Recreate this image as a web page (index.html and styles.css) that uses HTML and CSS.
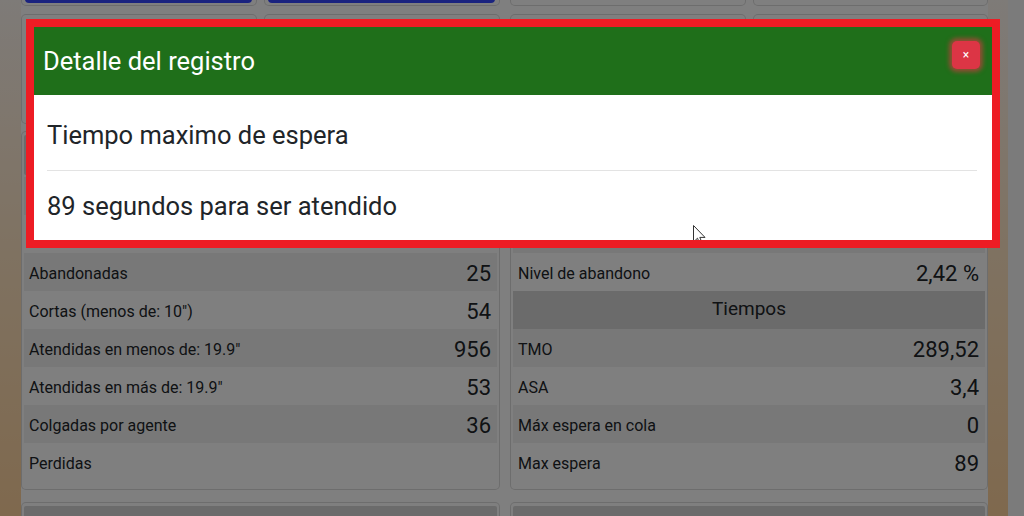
FILE: index.html
```html
<!DOCTYPE html>
<html lang="es">
<head>
<meta charset="utf-8">
<title>Detalle del registro</title>
<link rel="stylesheet" href="styles.css">
</head>
<body>
<div class="page">
  <main class="dash">
    <div class="cols row-a">
      <div class="pair">
        <div class="tile"><div class="btn-blue"></div></div>
        <div class="tile"><div class="btn-blue"></div></div>
      </div>
      <div class="pair">
        <div class="tile"></div>
        <div class="tile"></div>
      </div>
    </div>
    <div class="cols row-b">
      <div class="pair">
        <div class="tile"></div>
        <div class="tile"></div>
      </div>
      <div class="pair">
        <div class="tile"></div>
        <div class="tile"></div>
      </div>
    </div>
    <div class="cols cards">
      <section class="card">
        <div class="card-head"></div>
        <div class="row alt"></div>
        <div class="row"></div>
        <div class="row alt"><span class="label">Abandonadas</span><span class="value">25</span></div>
        <div class="row"><span class="label">Cortas (menos de: 10")</span><span class="value">54</span></div>
        <div class="row alt"><span class="label">Atendidas en menos de: 19.9"</span><span class="value">956</span></div>
        <div class="row"><span class="label">Atendidas en más de: 19.9"</span><span class="value">53</span></div>
        <div class="row alt"><span class="label">Colgadas por agente</span><span class="value">36</span></div>
        <div class="row"><span class="label">Perdidas</span><span class="value"></span></div>
      </section>
      <section class="card">
        <div class="card-head"></div>
        <div class="section-row"></div>
        <div class="row alt"></div>
        <div class="row"><span class="label">Nivel de abandono</span><span class="value">2,42 %</span></div>
        <div class="section-row">Tiempos</div>
        <div class="row alt"><span class="label">TMO</span><span class="value">289,52</span></div>
        <div class="row"><span class="label">ASA</span><span class="value">3,4</span></div>
        <div class="row alt"><span class="label">Máx espera en cola</span><span class="value">0</span></div>
        <div class="row"><span class="label">Max espera</span><span class="value">89</span></div>
      </section>
    </div>
    <div class="cols cards next">
      <section class="card"><div class="card-head"></div></section>
      <section class="card"><div class="card-head"></div></section>
    </div>
  </main>
  <div class="gutter"></div>
  <div class="track"></div>
</div>

<div class="backdrop"></div>

<div class="modal" role="dialog">
  <div class="modal-head">
    <h2 class="modal-title">Detalle del registro</h2>
    <button class="close" type="button">×</button>
  </div>
  <div class="modal-body">
    <div class="item">Tiempo maximo de espera</div>
    <div class="item">89 segundos para ser atendido</div>
    <svg class="cursor" width="13" height="21" viewBox="0 0 13 21">
      <path d="M0.5 0.5 L0.5 17 L4.5 13.2 L7.2 19.6 L9.4 18.7 L6.8 12.4 L12 12.4 Z" fill="#fff" stroke="#333" stroke-width="1"/>
    </svg>
  </div>
</div>
</body>
</html>
```
FILE: styles.css
```css
* { box-sizing: border-box; }

html, body {
  margin: 0;
  height: 100%;
}

body {
  font-family: Roboto, "Liberation Sans", sans-serif;
  color: #212529;
  background: linear-gradient(180deg, #fdf6f0 0%, #ffe4c2 50%, #ffd29c 100%);
  overflow: hidden;
}

.page {
  display: flex;
  height: 100vh;
  overflow: hidden;
}

.dash {
  flex: none;
  width: 967px;
  margin-left: 21px;
  background: #fff;
  display: flex;
  flex-direction: column;
  overflow: hidden;
}

.gutter { flex: none; width: 20px; }
.track { flex: none; width: 16px; background: #f7f7f7; }

.cols {
  display: grid;
  grid-template-columns: 479px 478px;
  column-gap: 10px;
  flex: none;
}

.pair {
  display: grid;
  grid-template-columns: 1fr 1fr;
  column-gap: 7px;
}

.tile {
  border: 1px solid rgba(0, 0, 0, 0.14);
  border-radius: 5px;
  background: #fff;
}

.row-a { margin-top: -34px; }
.row-a .tile { height: 40px; padding: 2px 4px 2px 3px; }

.btn-blue {
  height: 100%;
  background: #3446ff;
  border-radius: 4px;
}

.row-b { margin-top: 8px; }
.row-b .tile { height: 110px; }

.cards { margin-top: 7px; }
.cards.next { margin-top: 12px; }

.card {
  border: 1px solid rgba(0, 0, 0, 0.14);
  border-radius: 5px;
  padding: 3px 2px 8px;
  background: #fff;
}

.card-head {
  height: 40px;
  margin-bottom: 2px;
  background: #d6d6d6;
  border-radius: 2px;
}

.row {
  height: 38px;
  display: flex;
  align-items: center;
  justify-content: space-between;
  padding: 3px 6px 0 5px;
}

.row.alt { background: #f1f1f1; }

.label { font-size: 16px; }
.value { font-size: 22px; }

.section-row {
  height: 38px;
  line-height: 35px;
  text-align: center;
  font-size: 19px;
  background: #d6d6d6;
}

.backdrop {
  position: fixed;
  inset: 0;
  background: rgba(0, 0, 0, 0.5);
}

.modal {
  position: fixed;
  left: 26px;
  top: 19px;
  width: 974px;
  border: 8px solid #ed1c24;
  background: #fff;
}

.modal-head {
  height: 68px;
  background: #1f6f1a;
  display: flex;
  align-items: center;
  justify-content: space-between;
  padding: 0 12px 0 9px;
}

.modal-title {
  margin: 0;
  font-size: 25.5px;
  font-weight: 400;
  color: #fff;
}

.close {
  align-self: flex-start;
  margin-top: 14px;
  width: 28px;
  height: 28px;
  padding: 0;
  border: 0;
  border-radius: 5px;
  background: #dc3545;
  color: #fff;
  font-family: inherit;
  font-size: 12px;
  line-height: 1;
  box-shadow: 0 0 4px 3px rgba(220, 53, 69, 0.6);
}

.modal-body {
  position: relative;
  overflow: hidden;
  padding: 5px 15px 0 13px;
  font-size: 25.5px;
}

.item {
  height: 71px;
  display: flex;
  align-items: center;
  border-bottom: 1px solid #e3e3e3;
}

.item + .item {
  height: 69px;
  border-bottom: 0;
}

.cursor {
  position: absolute;
  left: 659px;
  top: 130px;
}
```
